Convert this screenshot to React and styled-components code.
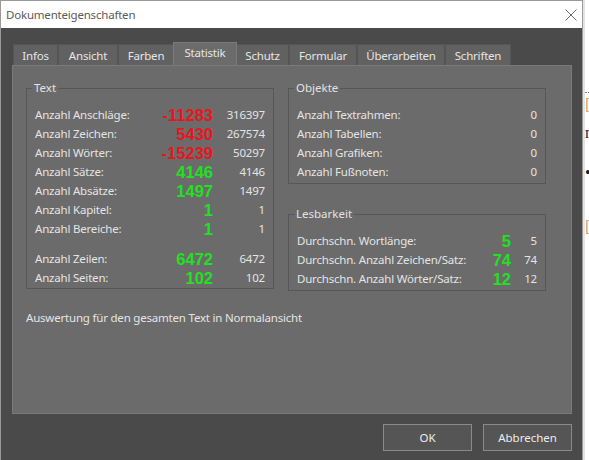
import React from 'react';
import styled, { createGlobalStyle } from 'styled-components';

const GlobalStyle = createGlobalStyle`
  html, body {
    margin: 0;
    padding: 0;
    background: #ffffff;
  }
  body {
    font-family: 'Noto Sans', 'Open Sans', Arial, sans-serif;
    font-size: 11.5px;
  }
`;

const textRows = [
  { label: 'Anzahl Anschläge:', big: '-11283', small: '316397', tone: 'red' },
  { label: 'Anzahl Zeichen:', big: '5430', small: '267574', tone: 'red' },
  { label: 'Anzahl Wörter:', big: '-15239', small: '50297', tone: 'red' },
  { label: 'Anzahl Sätze:', big: '4146', small: '4146', tone: 'green' },
  { label: 'Anzahl Absätze:', big: '1497', small: '1497', tone: 'green' },
  { label: 'Anzahl Kapitel:', big: '1', small: '1', tone: 'green' },
  { label: 'Anzahl Bereiche:', big: '1', small: '1', tone: 'green' },
  { label: 'Anzahl Zeilen:', big: '6472', small: '6472', tone: 'green', spaced: true },
  { label: 'Anzahl Seiten:', big: '102', small: '102', tone: 'green' }
];

const objectRows = [
  { label: 'Anzahl Textrahmen:', small: '0' },
  { label: 'Anzahl Tabellen:', small: '0' },
  { label: 'Anzahl Grafiken:', small: '0' },
  { label: 'Anzahl Fußnoten:', small: '0' }
];

const readRows = [
  { label: 'Durchschn. Wortlänge:', big: '5', small: '5' },
  { label: 'Durchschn. Anzahl Zeichen/Satz:', big: '74', small: '74' },
  { label: 'Durchschn. Anzahl Wörter/Satz:', big: '12', small: '12' }
];

// tab widths as measured from the dialog
const tabs = [
  { name: 'Infos', width: 45 },
  { name: 'Ansicht', width: 60 },
  { name: 'Farben', width: 56 },
  { name: 'Statistik', width: 64 },
  { name: 'Schutz', width: 53 },
  { name: 'Formular', width: 68 },
  { name: 'Überarbeiten', width: 88 },
  { name: 'Schriften', width: 66 }
];

const tones = {
  red: '#e8161b',
  green: '#22e022'
};

const StatRows = ({ rows, bigWidth, smallWidth }) => (
  <Rows>
    {rows.map(r => (
      <Row key={r.label} spaced={r.spaced}>
        <Label>{r.label}</Label>
        {bigWidth ? (
          <Big width={bigWidth} tone={r.tone || 'green'}>
            {r.big}
          </Big>
        ) : null}
        <Small width={smallWidth}>{r.small}</Small>
      </Row>
    ))}
  </Rows>
);

const CloseIcon = () => (
  <svg width="12" height="12" viewBox="0 0 12 12">
    <path d="M0.5 0.5 L11.5 11.5 M11.5 0.5 L0.5 11.5" stroke="#6a6a6a" strokeWidth="1" fill="none" />
  </svg>
);

const App = () => (
  <Screen>
    <GlobalStyle />
    <Dialog>
      <TitleBar>
        <Title>Dokumenteigenschaften</Title>
        <CloseButton>
          <CloseIcon />
        </CloseButton>
      </TitleBar>
      <Body>
        <TabStrip>
          {tabs.map(t => (
            <Tab key={t.name} width={t.width} active={t.name === 'Statistik'}>
              {t.name}
            </Tab>
          ))}
        </TabStrip>
        <Panel>
          <Columns>
            <Group width={248} height={209}>
              <Legend>Text</Legend>
              <StatRows rows={textRows} bigWidth={58} smallWidth={52} />
            </Group>
            <RightColumn>
              <Group width={258} height={104}>
                <Legend>Objekte</Legend>
                <StatRows rows={objectRows} smallWidth={40} />
              </Group>
              <Group width={258} height={85}>
                <Legend>Lesbarkeit</Legend>
                <StatRows rows={readRows} bigWidth={40} smallWidth={26} />
              </Group>
            </RightColumn>
          </Columns>
          <Note>Auswertung für den gesamten Text in Normalansicht</Note>
        </Panel>
        <Buttons>
          <Button>OK</Button>
          <Button>Abbrechen</Button>
        </Buttons>
      </Body>
    </Dialog>
    <Backdrop>
      <Dots />
      <Glyph top={4} color="#c8a070">[</Glyph>
      <Glyph top={12}>n</Glyph>
      <Glyph top={24}>•</Glyph>
      <Glyph top={38} color="#c8a070">[</Glyph>
    </Backdrop>
  </Screen>
);

const Screen = styled.div`
  display: flex;
  width: 589px;
  height: 460px;
  overflow: hidden;
`;

const Dialog = styled.div`
  width: 581px;
  flex-shrink: 0;
  display: flex;
  flex-direction: column;
  border: 1px solid #9a9a9a;
  border-bottom: none;
  background: #4a4a4a;
`;

const TitleBar = styled.div`
  height: 27px;
  background: #ffffff;
  display: flex;
  align-items: center;
  justify-content: space-between;
  padding: 0 1px 0 5px;
`;

const Title = styled.div`
  color: #5a5a5a;
  font-size: 11.5px;
  letter-spacing: -0.2px;
`;

const CloseButton = styled.div`
  width: 20px;
  height: 20px;
  display: flex;
  align-items: center;
  justify-content: center;
`;

const Body = styled.div`
  flex: 1;
  display: flex;
  flex-direction: column;
  padding: 14px 9px 0 11px;
`;

const TabStrip = styled.div`
  display: flex;
  align-items: flex-end;
  height: 23px;
  padding-left: 1px;
`;

const Tab = styled.div`
  width: ${p => p.width}px;
  box-sizing: border-box;
  height: ${p => (p.active ? '23px' : '21px')};
  display: flex;
  align-items: center;
  justify-content: center;
  background: ${p => (p.active ? '#6b6b6b' : '#616161')};
  border: 1px solid ${p => (p.active ? '#7a7a7a' : '#555555')};
  border-bottom: none;
  margin-left: ${p => (p.active ? '-1px' : '0')};
  margin-right: ${p => (p.active ? '-1px' : '0')};
  position: relative;
  z-index: ${p => (p.active ? 1 : 0)};
  color: #e6e6e6;
  font-size: 11.5px;
  padding-bottom: ${p => (p.active ? '3px' : '0')};
  letter-spacing: -0.2px;
`;

const Panel = styled.div`
  width: 560px;
  height: 349px;
  box-sizing: border-box;
  background: #6b6b6b;
  border: 1px solid #7a7a7a;
  padding: 14px 13px 0 13px;
  display: flex;
  flex-direction: column;
`;

const Columns = styled.div`
  display: flex;
  gap: 14px;
`;

const RightColumn = styled.div`
  display: flex;
  flex-direction: column;
  gap: 22px;
`;

const Group = styled.fieldset`
  margin: 0;
  width: ${p => p.width}px;
  height: ${p => p.height}px;
  box-sizing: border-box;
  border: 1px solid #575757;
  padding: 9px 8px 0 8px;
  min-inline-size: 0;
`;

const Legend = styled.legend`
  padding: 0 2px;
  margin-left: -3px;
  color: #e2e2e2;
  font-size: 11.5px;
  line-height: 16px;
`;

const Rows = styled.div`
  display: flex;
  flex-direction: column;
`;

const Row = styled.div`
  display: flex;
  align-items: center;
  height: 19px;
  margin-top: ${p => (p.spaced ? '11px' : '0')};
`;

const Label = styled.div`
  flex: 1;
  color: #e4e4e4;
  font-size: 11.5px;
  white-space: nowrap;
  letter-spacing: -0.2px;
`;

const Big = styled.div`
  width: ${p => p.width}px;
  text-align: right;
  font-family: 'Liberation Sans', Arial, sans-serif;
  font-weight: 700;
  font-size: 16.5px;
  line-height: 19px;
  padding-top: 2px;
  color: ${p => tones[p.tone]};
`;

const Small = styled.div`
  width: ${p => p.width}px;
  text-align: right;
  color: #e4e4e4;
  font-size: 11.5px;
  letter-spacing: -0.2px;
`;

const Note = styled.div`
  margin-top: 19px;
  color: #e4e4e4;
  font-size: 11.5px;
  letter-spacing: -0.2px;
`;

const Buttons = styled.div`
  display: flex;
  justify-content: flex-end;
  gap: 11px;
  width: 560px;
  margin-top: 10px;
`;

const Button = styled.button`
  width: 89px;
  height: 27px;
  background: #555555;
  border: 1px solid #8a8a8a;
  color: #ececec;
  font-family: 'Noto Sans', 'Open Sans', Arial, sans-serif;
  font-size: 11.5px;
  padding: 0;
`;

const Backdrop = styled.div`
  flex: 1;
  background: #ffffff;
  border-left: 2px solid #e4e4e4;
  display: flex;
  flex-direction: column;
  padding-top: 92px;
  font-family: 'Liberation Serif', serif;
  font-size: 16px;
`;

const Dots = styled.div`
  border-top: 1px dotted #888888;
  height: 0;
`;

const Glyph = styled.div`
  margin-top: ${p => p.top}px;
  color: ${p => p.color || '#1a1a2a'};
  line-height: 16px;
`;

export default App;
